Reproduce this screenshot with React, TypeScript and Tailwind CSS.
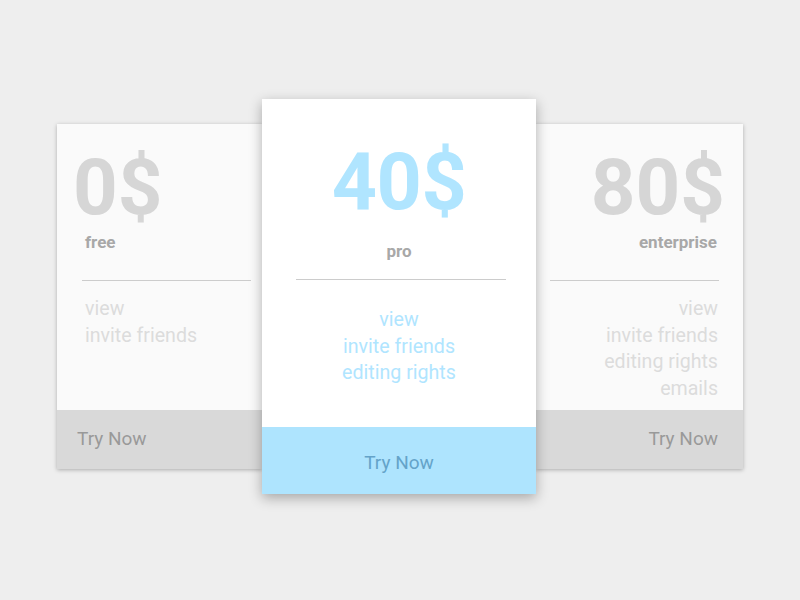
const font = { fontFamily: "Roboto, 'Noto Sans', sans-serif" }

const PricingPage = () => {
  return (
    <div
      className="h-[600px] w-full bg-[#eeeeee] flex items-center justify-center pb-[7px]"
      style={font}
    >
      {/* Left */}
      <div className="w-[205px] h-[345px] bg-[#fafafa] flex flex-col shadow-[0_1px_4px_rgba(0,0,0,0.28)]">
        <div className="pt-[25px] pl-[16px] text-[78px] leading-[78px] font-bold text-[#d6d6d6]">0$</div>
        <div className="mt-[5px] pl-[28px] text-[17px] leading-[20px] font-bold text-[#a8a8a8]">free</div>
        <div className="mt-[28px] ml-[25px] mr-[11px] h-px bg-[#cccccc]" />
        <ul className="mt-[15px] pl-[28px] text-[19.6px] leading-[26.5px] text-[#dcdcdc]">
          <li>view</li>
          <li>invite friends</li>
        </ul>
        <button className="mt-auto h-[59px] bg-[#d9d9d9] text-left pl-[20px] text-[19px] text-[#999999]">Try Now</button>
      </div>

      {/* Center */}
      <div className="relative z-10 w-[274px] h-[395px] bg-white flex flex-col items-center shadow-[0_4px_12px_rgba(0,0,0,0.3)]">
        <div className="pt-[44px] text-[79px] leading-[79px] font-bold text-[#b0e5ff] tracking-[-0.5px]">40$</div>
        <div className="mt-[19px] text-[17px] leading-[20px] font-bold text-[#a8a8a8]">pro</div>
        <div className="mt-[18px] self-stretch ml-[34px] mr-[30px] h-px bg-[#cccccc]" />
        <ul className="mt-[27px] text-center text-[19.6px] leading-[26.5px] text-[#b0e5ff]">
          <li>view</li>
          <li>invite friends</li>
          <li>editing rights</li>
        </ul>
        <button className="mt-auto self-stretch h-[67px] pt-[6px] bg-[#aee4fe] text-[19px] text-[#64a3c9]">Try Now</button>
      </div>

      {/* Right */}
      <div className="w-[207px] h-[345px] bg-[#fafafa] flex flex-col items-end text-right shadow-[0_1px_4px_rgba(0,0,0,0.28)]">
        <div className="pt-[25px] pr-[18px] text-[78px] leading-[78px] font-bold text-[#d6d6d6]">80$</div>
        <div className="mt-[5px] pr-[26px] text-[17px] leading-[20px] font-bold text-[#a8a8a8]">enterprise</div>
        <div className="mt-[28px] self-stretch ml-[14px] mr-[24px] h-px bg-[#cccccc]" />
        <ul className="mt-[15px] pr-[25px] text-[19.6px] leading-[26.5px] text-[#dcdcdc]">
          <li>view</li>
          <li>invite friends</li>
          <li>editing rights</li>
          <li>emails</li>
        </ul>
        <button className="mt-auto self-stretch h-[59px] bg-[#d9d9d9] text-right pr-[25px] text-[19px] text-[#999999]">Try Now</button>
      </div>
    </div>
  )
}

export default PricingPage
